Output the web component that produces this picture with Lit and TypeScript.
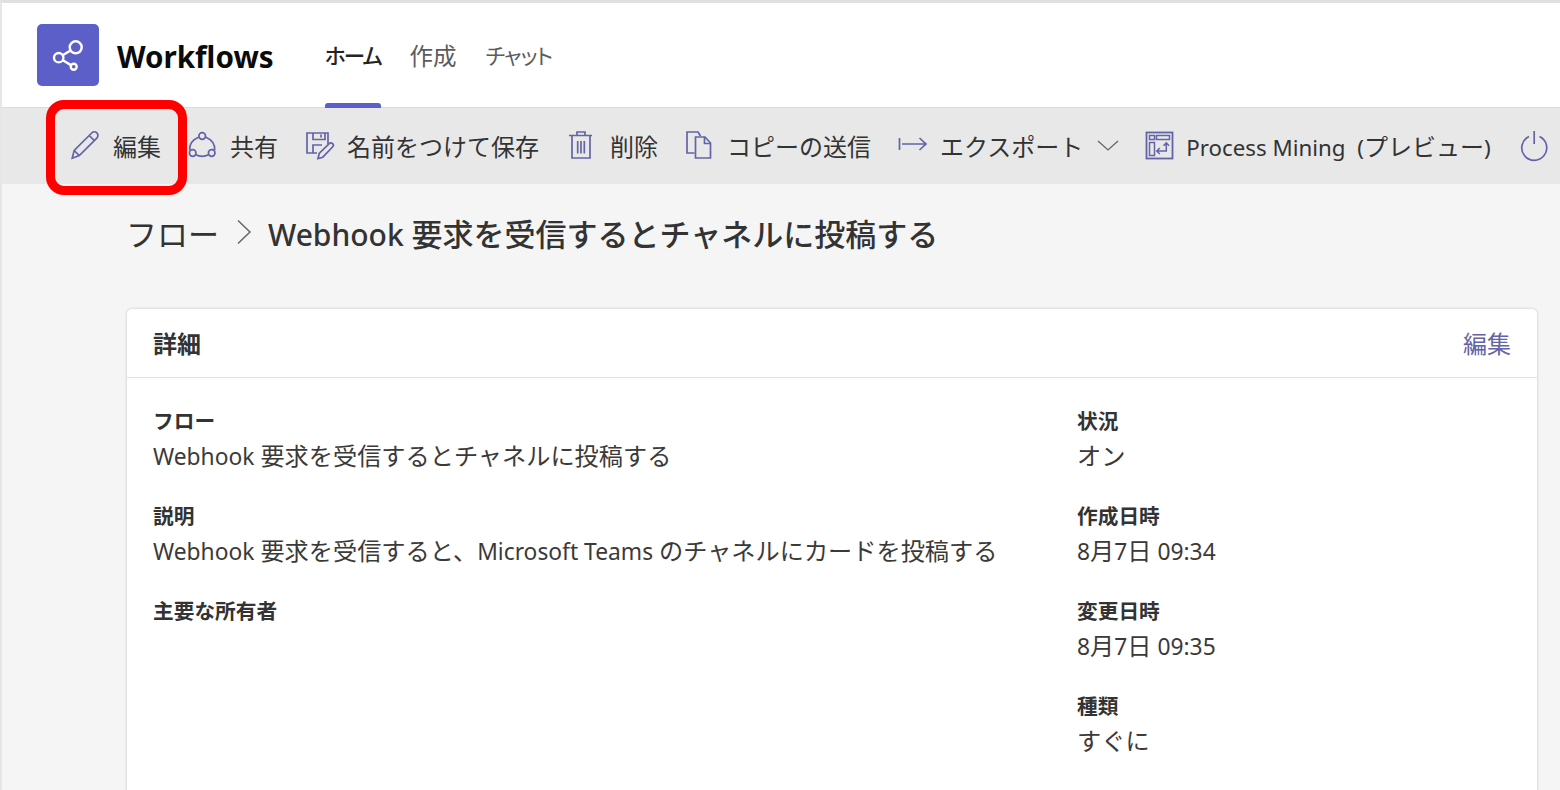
import { LitElement, html, css, svg } from "lit";
import { customElement } from "lit/decorators.js";

const ic = (body: unknown) => html`<svg class="ic" width="32" height="32" viewBox="0 0 32 32" fill="none" stroke="#6264a7" stroke-width="1.7">${body}</svg>`;

const icons = {
  edit: svg`<path d="M3.200 28.200l2-7.700L22.700 3c1.500-1.500 3.800-1.500 5.200-.1s1.400 3.700-.1 5.200L10.300 25.600z"/><path d="M5.200 20.500l5.100 5.100M20.200 5.500l5.200 5.200"/>`,
  share: svg`<circle cx="16.200" cy="6" r="3.300"/><circle cx="6.700" cy="23" r="3.300"/><circle cx="25.700" cy="23" r="3.300"/><path d="M13 7C7 9.500 3.200 14 3.700 20.200M19.400 7c6 2.500 9.800 7 9.300 13.200M9.800 24.800c4 1.900 8.800 1.900 12.800 0"/>`,
  save: svg`<path d="M14 23H4V3h21v11"/><path d="M10 3v6.500h12V3M18 4.500v3"/><path d="M10 23v-8h9"/><path d="M15 28.500l1.200-5 10-9.800c1-1 2.500-1 3.400-.1s.9 2.400-.1 3.400l-9.700 10.200z"/>`,
  del: svg`<path d="M3 5.500h23M11 5V2h8v3"/><path d="M6 5.500V28h18V5.500"/><path d="M11.700 11v12.500M15 11v12.500M18.300 11v12.500"/>`,
  copy: svg`<path d="M11.500 23H4V2h11l2.500 4"/><path d="M12.500 7H22l5.500 6v15h-15z"/><path d="M21.500 7v6.500h6"/>`,
  exp: svg`<path d="M3.500 8v12M6 14h24M23.500 8l6.500 6-6.500 6"/>`,
  mining: svg`<rect x="4.500" y="2.500" width="26" height="26" stroke-width="1.800"/><g stroke-width="1.500"><path d="M7.500 5.500h5v4h-5zM14.500 5.500h13v4h-13zM7.500 12.500h5v13h-5z"/><path d="M24.300 13v8h-9.500M21.500 15.700l2.800-2.800 2.800 2.800M17.800 18l-3 3 3 3"/></g>`,
  power: svg`<path d="M16.200 1v13"/><path d="M11 6.500a12.500 12.500 0 1 0 10.500 0"/>`,
};

const actions: [keyof typeof icons, string][] = [
  ["edit", "編集"],
  ["share", "共有"],
  ["save", "名前をつけて保存"],
  ["del", "削除"],
  ["copy", "コピーの送信"],
  ["exp", "エクスポート"],
  ["mining", "Process Mining (プレビュー)"],
];

const left: [string, string][] = [
  ["フロー", "Webhook 要求を受信するとチャネルに投稿する"],
  ["説明", "Webhook 要求を受信すると、Microsoft Teams のチャネルにカードを投稿する"],
  ["主要な所有者", ""],
];
const right: [string, string][] = [
  ["状況", "オン"],
  ["作成日時", "8月7日 09:34"],
  ["変更日時", "8月7日 09:35"],
  ["種類", "すぐに"],
];

const runs = (s: string) =>
  s.split(/([A-Za-z0-9: ]+|[()])/).map((p, i) =>
    i % 2 ? html`<span class=${p === "(" ? "lat open" : "lat"}>${p}</span>` : p
  );

@customElement("app-root")
export class AppRoot extends LitElement {
  static styles = css`
    :host {
      display: block;
      position: relative;
      width: 1560px;
      height: 790px;
      overflow: hidden;
      background: #f5f5f5;
      font-family: "Noto Sans", "Noto Sans CJK JP", sans-serif;
      color: #333;
      box-sizing: border-box;
      border-top: 3px solid #dfe1e1;
      border-left: 2px solid #e6e6e6;
    }
    .top {
      height: 105px;
      background: #fff;
      display: flex;
      align-items: center;
      padding-left: 35px;
      box-sizing: border-box;
      border-bottom: 1px solid #dcdcdc;
    }
    .logo {
      width: 62px;
      height: 62px;
      border-radius: 5px;
      background: #5b5fc7;
      flex: none;
    }
    .logo svg { display: block; }
    .app {
      margin-left: 18px;
      margin-top: 3px;
      font-size: 29.6px;
      font-weight: 700;
      color: #0b0b0b;
      width: 208px;
    }
    .tab {
      position: relative;
      align-self: stretch;
      display: flex;
      align-items: center;
      margin-right: 29px;
      padding-bottom: 1px;
      font-size: 23.5px;
      color: #5c5c5c;
      box-sizing: border-box;
      font-feature-settings: "palt";
    }
    .tab.home { font-size: 21.5px; letter-spacing: -2px; }
    .tab.chat { font-size: 21.5px; letter-spacing: -1px; }
    .tab.on { color: #252423; font-weight: 500; }
    .tab.on::after {
      content: "";
      position: absolute;
      left: 0;
      right: 0;
      bottom: -1px;
      height: 5px;
      border-radius: 3px 3px 0 0;
      background: #5b5fc7;
    }
    .bar {
      height: 76px;
      background: #e8e8e8;
      display: flex;
      align-items: center;
      padding-left: 67px;
      font-size: 24px;
      color: #333;
      white-space: nowrap;
    }
    .bar .lat { font-size: 22.3px; }
    .bar .open { margin-left: 6px; }
    .act { display: flex; align-items: center; gap: 12px; margin-right: 25px; }
    .act span.txt { padding-bottom: 2px; }
    .act.save, .act.mining { margin-right: 27px; }
    .ic { flex: none; }
    .chev { margin-left: -12px; margin-right: 22px; flex: none; }
    .crumb {
      display: flex;
      align-items: center;
      margin: 27px 0 0 124px;
      height: 42px;
      font-size: 31px;
      font-weight: 500;
      color: #333;
    }
    .crumb .lat { font-size: 30px; }
    .crumb .root { font-weight: 400; }
    .crumb svg { margin: 0 15px 0 16px; }
    .card {
      margin: 56px 0 0 125px;
      width: 1410px;
      height: 520px;
      background: #fff;
      border-radius: 5px;
      box-shadow: 0 0 3px rgba(0, 0, 0, 0.22);
    }
    .head {
      display: flex;
      align-items: center;
      justify-content: space-between;
      padding: 0 26px 2px;
      height: 66px;
      border-bottom: 1px solid #e1e1e1;
      font-size: 24px;
      font-weight: 700;
    }
    .head a { font-size: 24px; font-weight: 400; color: #6264a7; }
    .grid {
      display: grid;
      grid-template-columns: 924px 1fr;
      padding: 26px 26px 0;
    }
    .item { height: 95px; font-size: 24.2px; }
    .item .lat { font-size: 22.8px; }
    .lab { font-size: 20.7px; font-weight: 700; line-height: 34px; color: #333; }
    .val { margin-top: 1px; line-height: 34px; color: #3b3a39; }
    .mark {
      position: absolute;
      left: 44px;
      top: 97px;
      width: 141px;
      height: 95px;
      box-sizing: border-box;
      border: 9px solid #ff0000;
      border-radius: 18px;
    }
  `;

  private item([l, v]: [string, string]) {
    return html`<div class="item"><div class="lab">${l}</div><div class="val">${runs(v)}</div></div>`;
  }

  render() {
    return html`
      <div class="top">
        <div class="logo">
          <svg width="62" height="62" viewBox="0 0 62 62" fill="none" stroke="#fff" stroke-width="2.400">
            <circle cx="38.700" cy="23.300" r="6"/><circle cx="21.700" cy="33.700" r="4.700"/><circle cx="36.700" cy="42.700" r="3"/>
            <path d="M33.500 26.500l-7.800 4.800M25.800 36.200l8.200 4.900"/>
          </svg>
        </div>
        <div class="app">Workflows</div>
        <div class="tab on home">ホーム</div>
        <div class="tab">作成</div>
        <div class="tab chat">チャット</div>
      </div>
      <div class="bar">
        ${actions.map(([k, t]) => html`
          <div class="act ${k}">${ic(icons[k])}<span class="txt">${runs(t)}</span></div>
          ${k === "exp" ? html`<svg class="chev" width="24" height="24" viewBox="0 0 24 24" fill="none" stroke="#666" stroke-width="1.300"><path d="M2 7l10 9 10-9"/></svg>` : ""}
        `)}
        ${ic(icons.power)}
      </div>
      <div class="crumb">
        <span class="root">フロー</span>
        <svg width="18" height="26" viewBox="0 0 18 26" fill="none" stroke="#666" stroke-width="1.500"><path d="M3 1.500l12 11.500L3 24.500"/></svg>
        <span>${runs("Webhook 要求を受信するとチャネルに投稿する")}</span>
      </div>
      <div class="card">
        <div class="head"><span>詳細</span><a>編集</a></div>
        <div class="grid">
          <div>${left.map((e) => this.item(e))}</div>
          <div>${right.map((e) => this.item(e))}</div>
        </div>
      </div>
      <div class="mark"></div>
    `;
  }
}
